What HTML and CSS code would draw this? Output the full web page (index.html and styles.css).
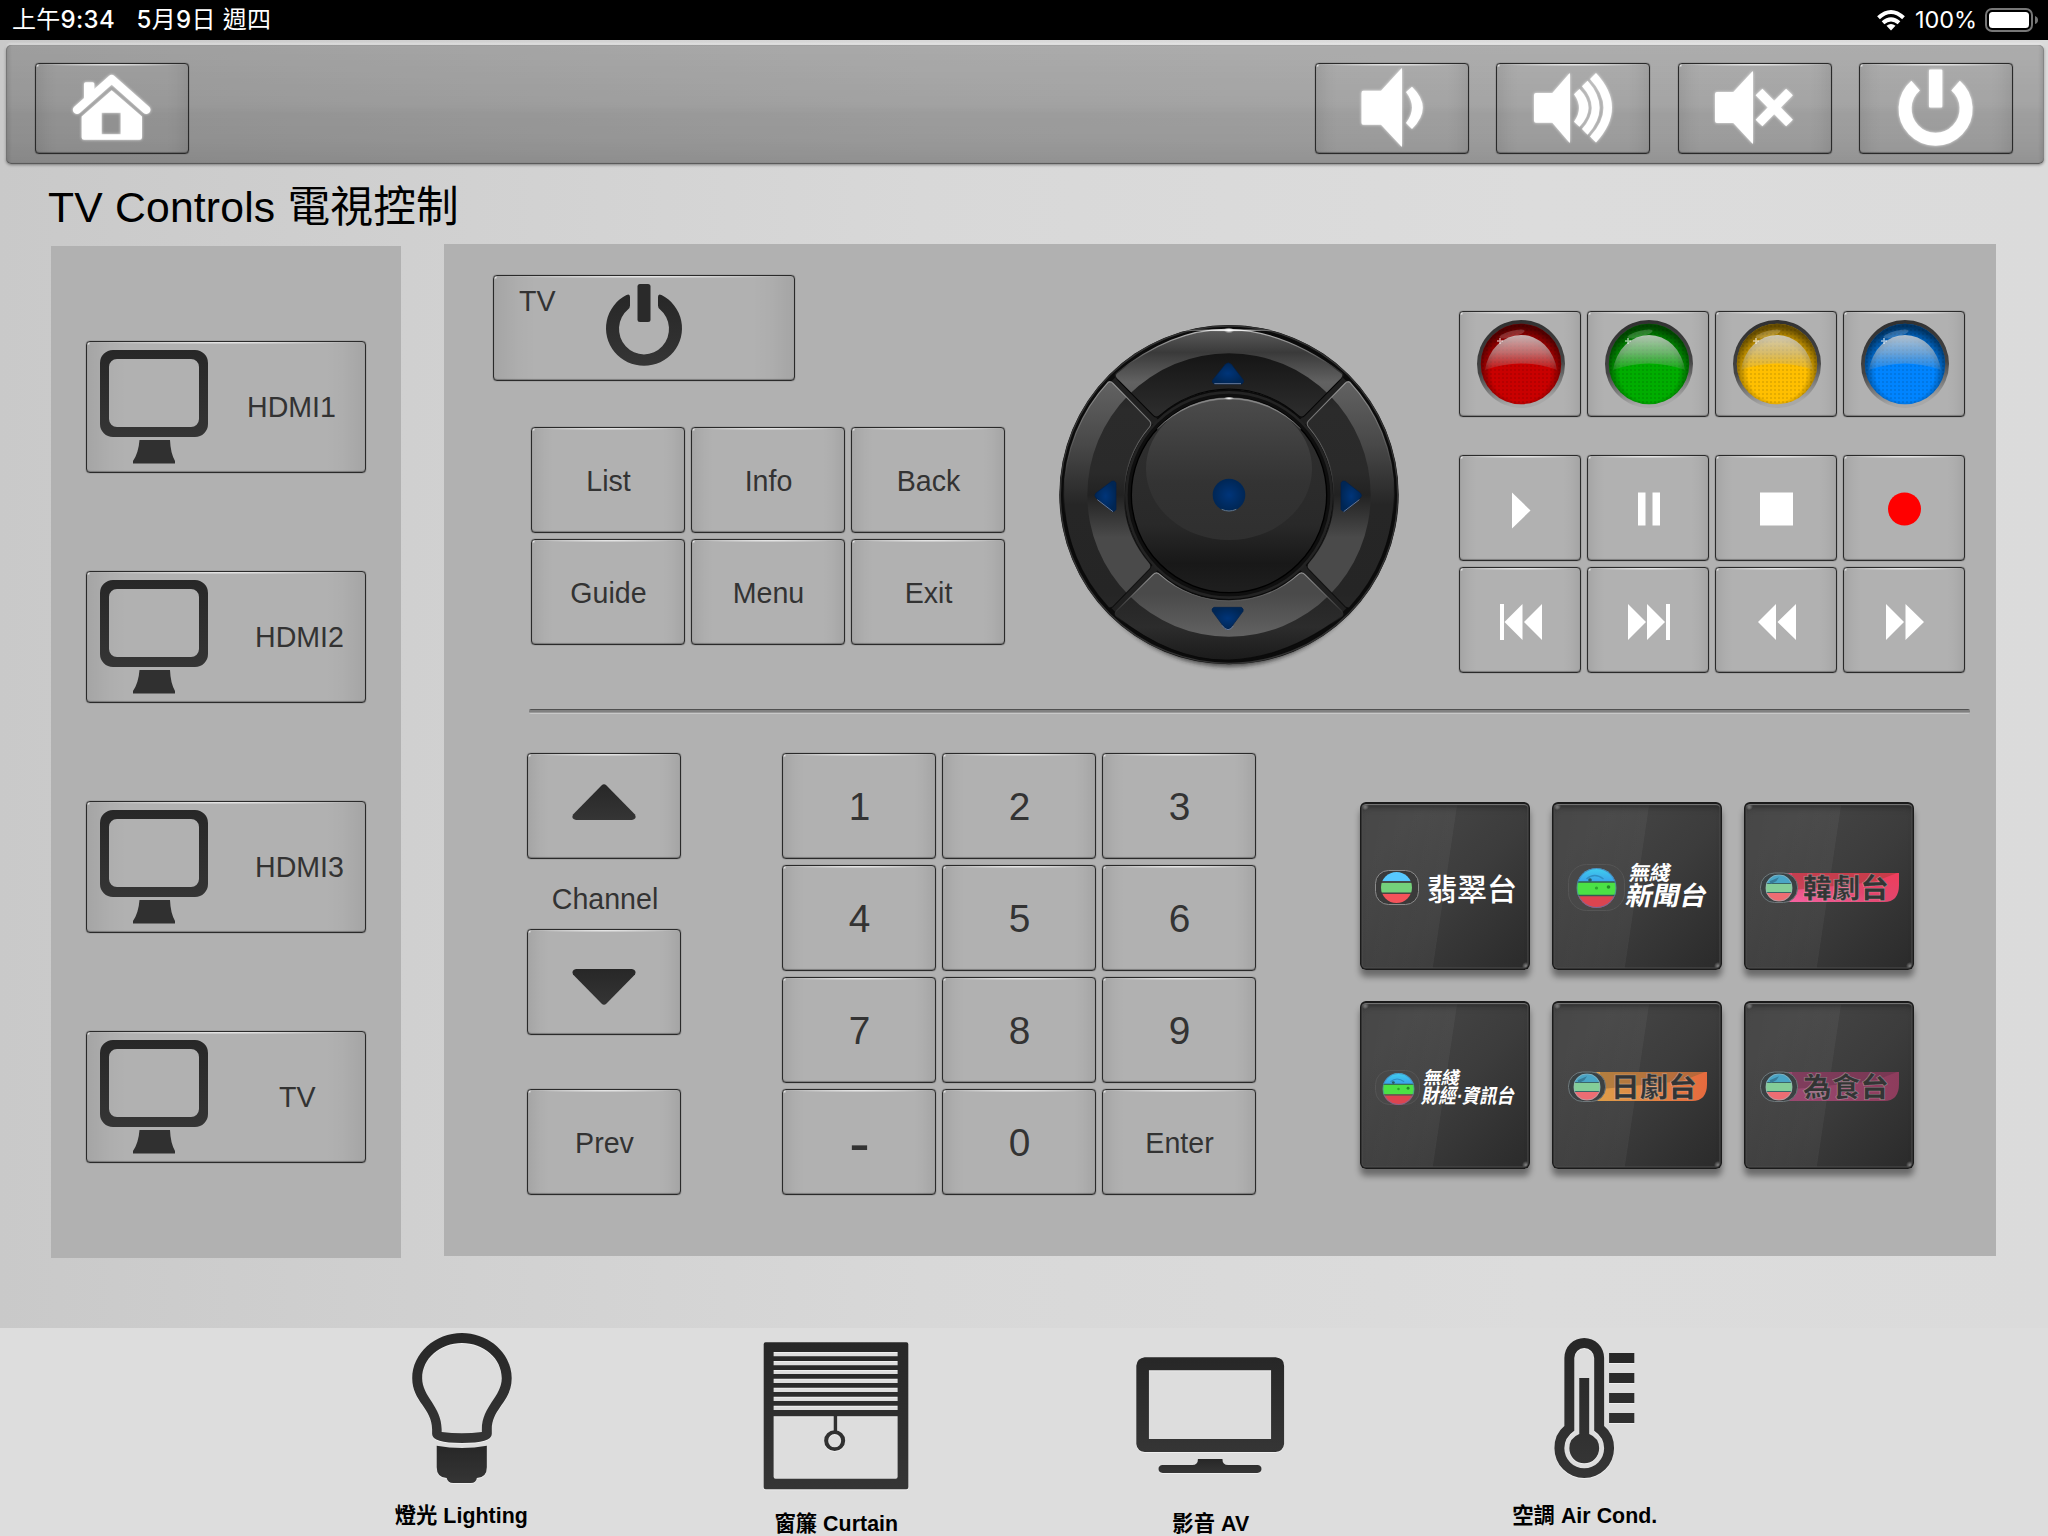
FILE: index.html
```html
<!DOCTYPE html>
<html lang="zh-Hant">
<head>
<meta charset="utf-8">
<title>TV Controls</title>
<link rel="stylesheet" href="styles.css">
</head>
<body>
<svg class="defs" width="0" height="0">
  <defs>
    <linearGradient id="ink" x1="0" y1="0" x2="0" y2="1"><stop offset="0" stop-color="#272727"/><stop offset="1" stop-color="#353535"/></linearGradient>
    <linearGradient id="rim" x1="0" y1="0" x2="0.15" y2="1"><stop offset="0" stop-color="#2e2e2e"/><stop offset=".6" stop-color="#444"/><stop offset="1" stop-color="#a8a8a8"/></linearGradient>
    <linearGradient id="glass" x1="0" y1="0" x2="0" y2="1"><stop offset="0" stop-color="#d2d2d2" stop-opacity=".85"/><stop offset=".5" stop-color="#bbb" stop-opacity=".58"/><stop offset="1" stop-color="#aaa" stop-opacity=".12"/></linearGradient>
    <radialGradient id="shade" cx=".5" cy=".6" r=".56"><stop offset=".65" stop-color="#000" stop-opacity="0"/><stop offset="1" stop-color="#000" stop-opacity=".6"/></radialGradient>
    <pattern id="dots" width="4" height="4" patternUnits="userSpaceOnUse"><rect x="1" y="1" width="2" height="2" fill="#000" opacity=".1"/></pattern>
    <symbol id="ball" viewBox="0 0 88 88">
      <circle cx="44" cy="44" r="44" fill="url(#rim)"/>
      <circle cx="44" cy="44" r="40.200" fill="currentColor"/>
      <circle cx="44" cy="44" r="40.200" fill="url(#dots)"/>
      <circle cx="44" cy="44" r="40.200" fill="url(#shade)"/>
      <path d="M8 50A36.500 42 0 0 1 80 50Q62 43.500 44 43.500T8 50Z" fill="url(#glass)"/>
      <ellipse cx="35" cy="14" rx="13" ry="3" fill="#fff" opacity=".18" transform="rotate(-15 35 14)"/>
      <path d="M20 21h6M23 18v6" stroke="#fff" stroke-width="1.600" opacity=".6"/>
    </symbol>
    <symbol id="monitor" viewBox="0 0 110 116">
      <path fill-rule="evenodd" fill="url(#ink)" d="M13 0h82a13 13 0 0 1 13 13v61a13 13 0 0 1-13 13H13A13 13 0 0 1 0 74V13A13 13 0 0 1 13 0ZM17 9a8 8 0 0 0-8 8v52a8 8 0 0 0 8 8h74a8 8 0 0 0 8-8V17a8 8 0 0 0-8-8Z"/>
      <path fill="#303030" d="M39.500 90h30.500q.5 13 5 21v2.500h-42V111q5.500-8 6.500-21Z"/>
    </symbol>
    <clipPath id="globe"><circle cx="20" cy="20" r="20"/></clipPath>
    <linearGradient id="g2" x1="0" y1="0" x2="0" y2="1"><stop offset="0" stop-color="#3fd0ee"/><stop offset="1" stop-color="#3aa2ea"/></linearGradient>
    <symbol id="globe-flat" viewBox="0 0 40 40"><g clip-path="url(#globe)"><path fill="#57c9ff" d="M0 0h40v12H0z"/><path fill="#74d17b" d="M0 14h40v13H0z"/><path fill="#f4535a" d="M0 28h40v12H0z"/><path fill="#444" d="M0 12h40v1.500H0zM0 26.500h40V28H0z"/></g></symbol>
    <symbol id="globe-news" viewBox="0 0 40 40"><g clip-path="url(#globe)"><path fill="url(#g2)" d="M0 0h40v14H0z"/><path fill="#4be145" d="M0 14h40v13H0z"/><path fill="#dc4450" d="M0 27h40v13H0z"/><path fill="#345c50" d="M0 13.300h40v1.400H0zM0 26.800h40v1.400H0z"/><path d="M10 11q8-7 17 0" stroke="#2e8fc4" stroke-width="1.500" fill="none"/><circle cx="13.500" cy="12" r="1.800" fill="#2a5b65"/><circle cx="20" cy="20" r="1.600" fill="#2aa52c"/><circle cx="32" cy="19" r="1.800" fill="#238a28"/></g><circle cx="20" cy="20" r="19.500" fill="none" stroke="#4e77b0" stroke-width=".8"/></symbol>
    <symbol id="globe-soft" viewBox="0 0 40 40"><g clip-path="url(#globe)"><path fill="#4aa5c6" d="M0 0h40v13H0z"/><path fill="#84cd98" d="M0 13h40v14H0z"/><path fill="#ed6d73" d="M0 27h40v13H0z"/><path fill="#3c6668" d="M0 12.500h40V14H0zM0 26h40v1.500H0z"/><path d="M6 10 20 4l-4 6-8 4z" fill="#377b98"/></g><circle cx="20" cy="20" r="19.500" fill="none" stroke="#9bb5bb" stroke-width="1"/></symbol>
    <linearGradient id="pink" x1="0" y1="1" x2="1" y2="0"><stop offset="0" stop-color="#f765a5"/><stop offset=".5" stop-color="#e2466d"/><stop offset="1" stop-color="#f03d5b"/></linearGradient>
    <linearGradient id="orange"><stop offset="0" stop-color="#dca04a"/><stop offset="1" stop-color="#e66a3e"/></linearGradient>
    <linearGradient id="plum"><stop offset="0" stop-color="#9b4a72"/><stop offset="1" stop-color="#8d3c5c"/></linearGradient>
  </defs>
</svg>

<header class="status">
  <div class="status-left"><span>上午<b>9:34</b></span><span><b>5</b>月<b>9</b>日 週四</span></div>
  <div class="status-right">
    <svg class="wifi" viewBox="0 0 28 20"><g fill="none" stroke="#fff" stroke-width="4"><path d="M1.500 7.800Q14-3.800 26.500 7.800"/><path d="M6 12.800q8-7 16 0"/></g><path fill="#fff" d="M9.500 15.800q4.500-3.600 9 0L14 20.500Z"/></svg>
    <span class="percent">100%</span>
    <svg class="battery" viewBox="0 0 54 24"><rect x="1" y="1" width="46" height="22" rx="6" fill="none" stroke="#777" stroke-width="2"/><rect x="4" y="4" width="40" height="16" rx="3.500" fill="#fff"/><path d="M50 8q3 1 3 4t-3 4Z" fill="#777"/></svg>
  </div>
</header>

<main class="stage">
  <nav class="toolbar">
    <button class="key tool"><svg viewBox="106 187 462 272"><path fill="none" stroke="#fff" stroke-width="25" stroke-linecap="round" stroke-linejoin="round" d="M232 330 336 238 440 330"/><path fill="#fff" d="M253 252q0-5 5-5h21q5 0 5 5v34l-31 28Z"/><path fill="#fff" fill-rule="evenodd" d="M336 271 427 350v63q0 7-7 7H253q-7 0-7-7v-63ZM306 339v64h57v-64Z"/></svg></button>
    <div class="tools-right">
      <button class="key tool"><svg viewBox="0 0 154 91" fill="#fff"><path d="M48 28.700h18L85 8q2-3 2-1v77q0 2-2-1L66 62.700H48q-1.500 0-1.500-2V31q0-2.300 1.500-2.300Z"/><path d="M97 24.700q21.600 21 0 42.300L91 61q12-15.300 0-31Z"/></svg></button>
      <button class="key tool"><svg viewBox="0 0 154 91" fill="#fff"><path d="M40 31h16.300L72 13q2-3 2-1v68q0 2-2-1L56.300 60.700H40q-2 0-2-2V33q0-2 2-2Z"/><path d="M83.500 27q18 18.700 0 37.700L78 59.700q10-13.700 0-27.400Z"/><path d="M91.600 18.700q24 27 0 54L86 67q19.500-21.300 0-42.700Z"/><path d="M100 11q32 34.700 0 69.400L94 74.500q27-28.800 0-57.500Z"/></svg></button>
      <button class="key tool"><svg viewBox="0 0 154 91" fill="#fff"><path d="M39 30h16.300L73 11q2-3 2-1v71q0 2-2-1L55.300 61H39q-2 0-2-2V32q0-2 2-2Z"/><path fill="none" stroke="#fff" stroke-width="9.500" d="m81 30 30.500 31M111.500 30 81 61"/></svg></button>
      <button class="key tool"><svg viewBox="0 0 154 91"><path fill="none" stroke="#fff" stroke-width="13" d="M56.600 23.700a30.500 30.500 0 1 0 40 0"/><rect x="70" y="7.500" width="13.300" height="38" rx="1" fill="#fff"/></svg></button>
    </div>
  </nav>

  <h1 class="title">TV Controls 電視控制</h1>

  <div class="panels">
    <aside class="sources">
      <button class="key source"><svg class="monitor"><use href="#monitor"/></svg><span class="s1">HDMI1</span></button>
      <button class="key source"><svg class="monitor"><use href="#monitor"/></svg><span class="s2">HDMI2</span></button>
      <button class="key source"><svg class="monitor"><use href="#monitor"/></svg><span class="s2">HDMI3</span></button>
      <button class="key source"><svg class="monitor"><use href="#monitor"/></svg><span class="s3">TV</span></button>
    </aside>

    <section class="remote">
      <div class="upper">
        <div class="menu-col">
          <button class="key tv-power"><span>TV</span><svg viewBox="0 0 78 84"><path fill="url(#ink)" d="M21.500 12q3.500-1.800 3.500 2v8.500q0 2.200-1.800 3.700A25 25.500 0 1 0 54.800 26.200Q53 24.700 53 22.500V14q0-3.800 3.500-2A38 37.500 0 1 1 21.500 12Z"/><rect x="32.500" y="1" width="13" height="38" rx="2.500" fill="#2a2a2a"/></svg></button>
          <div class="menu-grid">
            <button class="key">List</button><button class="key">Info</button><button class="key">Back</button>
            <button class="key">Guide</button><button class="key">Menu</button><button class="key">Exit</button>
          </div>
        </div>

        <svg class="dpad" viewBox="0 0 1140 1110">
          <defs>
            <linearGradient id="outerBand" gradientUnits="userSpaceOnUse" x1="0" y1="58" x2="0" y2="1050"><stop offset="0" stop-color="#5c5c5c"/><stop offset=".07" stop-color="#3a3a3a"/><stop offset=".16" stop-color="#626262"/><stop offset=".35" stop-color="#484848"/><stop offset=".53" stop-color="#262626"/><stop offset=".8" stop-color="#252525"/><stop offset=".9" stop-color="#2c2c2c"/><stop offset="1" stop-color="#1b1b1b"/></linearGradient>
            <linearGradient id="innerBand" gradientUnits="userSpaceOnUse" x1="0" y1="130" x2="0" y2="980"><stop offset="0" stop-color="#151515"/><stop offset=".2" stop-color="#2b2b2b"/><stop offset=".42" stop-color="#2a2a2a"/><stop offset=".5" stop-color="#222"/><stop offset=".65" stop-color="#4a4a4a"/><stop offset=".85" stop-color="#4a4a4a"/><stop offset="1" stop-color="#626262"/></linearGradient>
            <linearGradient id="edge" x1="0" y1="0" x2="0" y2="1"><stop offset="0" stop-color="#bbb"/><stop offset=".3" stop-color="#666"/><stop offset=".6" stop-color="#050505"/></linearGradient>
            <linearGradient id="hub" x1="0" y1="0" x2="0" y2="1"><stop offset="0" stop-color="#303030"/><stop offset=".65" stop-color="#292929"/><stop offset=".85" stop-color="#181818"/><stop offset="1" stop-color="#1f1f1f"/></linearGradient>
            <linearGradient id="hubGlass" x1="0" y1="0" x2="0" y2="1"><stop offset="0" stop-color="#4c4c4c"/><stop offset=".6" stop-color="#333"/><stop offset="1" stop-color="#2f2f2f"/></linearGradient>
            <radialGradient id="blue"><stop offset="0" stop-color="#00357a"/><stop offset="1" stop-color="#002654"/></radialGradient>
            <radialGradient id="glint"><stop offset="0" stop-color="#fff"/><stop offset="1" stop-color="#fff" stop-opacity="0"/></radialGradient>
            <clipPath id="segments"><path d="M229 190Q399 54 567 58T906 190Q912 197 904 206L794 317Q785 326 775 317A312 312 0 0 0 359 317Q349 326 340 317L230 206Q222 197 229 190Z"/><path d="M229 919Q399 1054 567 1050T906 919Q912 911 904 902L794 793Q785 784 775 793A312 312 0 0 1 359 793Q349 784 340 793L230 902Q222 911 229 919Z"/><path d="M930 217A496 496 0 0 1 930 891Q925 897 915 890L806 778Q797 769 806 758A312 312 0 0 0 806 352Q797 342 806 332L915 220Q923 212 930 217Z"/><path d="M204 217A496 496 0 0 0 204 891Q209 897 219 890L328 778Q337 769 328 758A312 312 0 0 1 328 352Q337 342 328 332L219 220Q211 212 204 217Z"/></clipPath>
            <clipPath id="hubClip"><circle cx="567" cy="555" r="292"/></clipPath>
            <filter id="soft"><feGaussianBlur stdDeviation="7"/></filter>
          </defs>
          <ellipse cx="567" cy="570" rx="485" ry="500" fill="#222" opacity=".7" filter="url(#soft)"/>
          <circle cx="567" cy="554" r="509" fill="#0b0b0b"/>
          <circle cx="567" cy="554" r="506" fill="none" stroke="#333" stroke-width="4"/>
          <path d="M218 210 916 898M916 210 218 898" stroke="#202020" stroke-width="22"/>
          <g clip-path="url(#segments)"><circle cx="567" cy="554" r="500" fill="url(#outerBand)"/><circle cx="567" cy="555" r="425" fill="url(#innerBand)"/></g>
          <g fill="none" stroke="url(#edge)" stroke-width="3.500"><path d="M229 190Q399 54 567 58T906 190Q912 197 904 206L794 317Q785 326 775 317A312 312 0 0 0 359 317Q349 326 340 317L230 206Q222 197 229 190Z"/><path d="M229 919Q399 1054 567 1050T906 919Q912 911 904 902L794 793Q785 784 775 793A312 312 0 0 1 359 793Q349 784 340 793L230 902Q222 911 229 919Z" opacity=".7"/><path d="M930 217A496 496 0 0 1 930 891Q925 897 915 890L806 778Q797 769 806 758A312 312 0 0 0 806 352Q797 342 806 332L915 220Q923 212 930 217Z" opacity=".7"/><path d="M204 217A496 496 0 0 0 204 891Q209 897 219 890L328 778Q337 769 328 758A312 312 0 0 1 328 352Q337 342 328 332L219 220Q211 212 204 217Z" opacity=".7"/></g>
          <circle cx="567" cy="555" r="308" fill="#0f0f0f" stroke="#232323" stroke-width="8"/>
          <circle cx="567" cy="555" r="293" fill="url(#hub)" stroke="#000" stroke-width="4"/>
          <g clip-path="url(#hubClip)"><ellipse cx="567" cy="476" rx="249" ry="214" fill="url(#hubGlass)"/></g>
          <path d="M352 357A293 293 0 0 1 782 357A296 288 0 0 0 352 357Z" fill="#888" stroke="#888" stroke-width="1.500"/>
          <ellipse cx="567" cy="61" rx="16" ry="9" fill="url(#glint)"/><ellipse cx="567" cy="61" rx="160" ry="4" fill="url(#glint)"/>
          <ellipse cx="567" cy="265" rx="16" ry="5" fill="url(#glint)"/>
          <circle cx="567" cy="555" r="49" fill="url(#blue)"/><path d="M545 598q22 10 44 0" stroke="#678" stroke-width="3" fill="none"/>
          <g fill="url(#blue)" stroke="#00204c" stroke-width="2"><path d="M556 163q9-9 18 0l36 47q3 8-5 12h-82q-9-4-5-12Z"/><path d="M554 954q9 9 18 0l37-50q3-8-5-12h-82q-9 4-5 12Z"/><path d="M168 549q-7 7 0 15l47 39q8 5 13-5v-80q-5-8-13-4Z"/><path d="M961 549q7 7 0 15l-45 39q-8 5-13-5v-80q5-8 13-4Z"/></g>
          <g stroke="#66799a" stroke-width="3" fill="none"><path d="M523 221h80M546 946q9 13 18 13t16-11M172 569l47 36M958 569l-47 36"/></g>
        </svg>

        <div class="media-col">
          <div class="media-grid">
            <button class="key"><svg class="ball red"><use href="#ball"/></svg></button>
            <button class="key"><svg class="ball green"><use href="#ball"/></svg></button>
            <button class="key"><svg class="ball yellow"><use href="#ball"/></svg></button>
            <button class="key"><svg class="ball blue"><use href="#ball"/></svg></button>
          </div>
          <div class="media-grid">
            <button class="key"><svg class="glyph" viewBox="0 0 122 107"><path d="M53 37.500v36L71.500 55.500Z"/></svg></button>
            <button class="key"><svg class="glyph" viewBox="0 0 122 107"><path d="M51 37.500h7.500v33H51zM65.500 37.500H73v33h-7.500z"/></svg></button>
            <button class="key"><svg class="glyph" viewBox="0 0 122 107"><path d="M45 37.500h33v33H45z"/></svg></button>
            <button class="key"><svg class="glyph" viewBox="0 0 122 107"><circle cx="61.500" cy="54" r="16.500" fill="#f00"/></svg></button>
            <button class="key"><svg class="glyph" viewBox="0 0 122 107"><path d="M41 37h4v36h-4zM63.500 37v36l-18-18ZM83 37v36L65 55Z"/></svg></button>
            <button class="key"><svg class="glyph" viewBox="0 0 122 107"><path d="M41 37v36l18-18ZM60 37v36l18-18ZM79 37h4v36h-4z"/></svg></button>
            <button class="key"><svg class="glyph" viewBox="0 0 122 107"><path d="M61 37v36L43 55ZM81 37v36L62.500 55Z"/></svg></button>
            <button class="key"><svg class="glyph" viewBox="0 0 122 107"><path d="M43 37v36l18-18ZM62.500 37v36L81 55Z"/></svg></button>
          </div>
        </div>
      </div>

      <div class="rule"></div>

      <div class="lower">
        <div class="channel-col">
          <button class="key"><svg class="arrow up" viewBox="0 0 64 36"><path fill="url(#ink)" d="M29.500 1.500q2.500-2.500 5 0L63 30.500q2 4.500-3 5.500H4q-5-1-3-5.500Z"/></svg></button>
          <span class="channel-label">Channel</span>
          <button class="key"><svg class="arrow down" viewBox="0 0 64 36"><path fill="url(#ink)" d="M29.500 34.500q2.500 2.500 5 0L63 5.500Q65 1 60 0H4q-5 1-3 5.500Z"/></svg></button>
          <button class="key prev">Prev</button>
        </div>
        <div class="keypad">
          <button class="key">1</button><button class="key">2</button><button class="key">3</button>
          <button class="key">4</button><button class="key">5</button><button class="key">6</button>
          <button class="key">7</button><button class="key">8</button><button class="key">9</button>
          <button class="key"><span class="dash">-</span></button><button class="key">0</button><button class="key word">Enter</button>
        </div>
        <div class="stations">
          <button class="tile"><svg viewBox="0 0 170 168"><rect x="15.500" y="68.500" width="43" height="34" rx="13" fill="#3a3a3a" stroke="#8b8b8b"/><use href="#globe-flat" x="21" y="70" width="31" height="31"/><text class="light" x="67" y="97.500" font-size="30" textLength="90" lengthAdjust="spacingAndGlyphs">翡翠台</text></svg></button>
          <button class="tile"><svg viewBox="0 0 170 168"><rect x="16.500" y="62.500" width="56" height="46" rx="18" fill="#484848" stroke="#555"/><use href="#globe-news" x="24.500" y="66" width="40" height="40"/><g transform="skewX(-12)"><text x="93" y="78.500" font-size="20" textLength="41" lengthAdjust="spacingAndGlyphs">無綫</text><text x="94.500" y="103.500" font-size="26" textLength="81" lengthAdjust="spacingAndGlyphs">新聞台</text></g></svg></button>
          <button class="tile"><svg viewBox="0 0 170 168"><path d="M40 71h115v12q0 17-15 17H40Z" fill="url(#pink)"/><path d="M48 71h105L130 80 50 88Z" fill="#b03a3c" opacity=".6"/><rect x="16.500" y="71" width="37" height="29.500" rx="14" fill="#3b4143" stroke="#6e787b"/><use href="#globe-soft" x="21.500" y="72.500" width="27" height="27"/><text class="ink" x="59" y="95.500" font-size="27" textLength="86" lengthAdjust="spacingAndGlyphs">韓劇台</text></svg></button>
          <button class="tile"><svg viewBox="0 0 170 168"><rect x="15.500" y="69.500" width="44" height="34" rx="14" fill="#484848" stroke="#555"/><use href="#globe-news" x="22.500" y="72" width="32" height="32"/><g transform="skewX(-12)"><text x="80.500" y="83" font-size="17.500" textLength="36" lengthAdjust="spacingAndGlyphs">無綫</text><text x="82.500" y="102" font-size="20" textLength="93" lengthAdjust="spacingAndGlyphs">財經<tspan class="dot">·</tspan>資訊台</text></g></svg></button>
          <button class="tile"><svg viewBox="0 0 170 168"><path d="M40 71h115v12q0 17-15 17H40Z" fill="url(#orange)"/><path d="M48 71h105L130 80 50 88Z" fill="#8a6236" opacity=".5"/><rect x="16.500" y="71" width="37" height="29.500" rx="14" fill="#3b4143" stroke="#6e787b"/><use href="#globe-soft" x="21.500" y="72.500" width="27" height="27"/><text class="ink" x="59" y="95.500" font-size="27" textLength="86" lengthAdjust="spacingAndGlyphs">日劇台</text></svg></button>
          <button class="tile"><svg viewBox="0 0 170 168"><path d="M40 71h115v12q0 17-15 17H40Z" fill="url(#plum)"/><path d="M48 71h105L130 80 50 88Z" fill="#66324a" opacity=".5"/><rect x="16.500" y="71" width="37" height="29.500" rx="14" fill="#3b4143" stroke="#6e787b"/><use href="#globe-soft" x="21.500" y="72.500" width="27" height="27"/><text class="ink" x="59" y="95.500" font-size="27" textLength="86" lengthAdjust="spacingAndGlyphs">為食台</text></svg></button>
        </div>
      </div>
    </section>
  </div>
</main>

<footer class="dock">
  <a class="dock-item">
    <svg width="106" height="164" viewBox="126 54 277 492" preserveAspectRatio="none" fill="url(#ink)"><path fill-rule="evenodd" d="M267 69C337 69 397 130 397 205C397 275 345 295 345 358V372Q345 399 267 399T189 372V358C189 295 137 275 137 205C137 130 197 69 267 69ZM267 99C210 99 163 145 163 205C163 260 214 290 214 358V366Q267 374 319 366V358C319 290 371 260 371 205C371 145 324 99 267 99Z"/><path d="M201 407Q267 421 332 407V472Q332 503 306 504Q304 519 290 519H244Q230 519 227 504Q201 503 201 472Z"/></svg>
    <span>燈光 Lighting</span>
  </a>
  <a class="dock-item low">
    <svg width="150" height="164" viewBox="1049 54 392 492" preserveAspectRatio="none"><path fill="url(#ink)" fill-rule="evenodd" d="M1061 97H1429Q1434 97 1434 103V532Q1434 538 1429 538H1061Q1056 538 1056 532V103Q1056 97 1061 97ZM1082 126V139H1406V126ZM1082 153V166H1406V153ZM1082 180V192H1406V180ZM1082 206V219H1406V206ZM1082 233V246H1406V233ZM1082 260V273H1406V260ZM1082 287V300H1406V287ZM1082 319V500Q1082 506 1087 506H1401Q1406 506 1406 500V319Z"/><path d="M1239 317h9v46h-9z" fill="#303030"/><path fill="#303030" fill-rule="evenodd" d="M1214 392A27.500 31 0 1 1 1269 392A27.500 31 0 1 1 1214 392ZM1224.500 392A17 20 0 1 0 1258.500 392A17 20 0 1 0 1224.500 392Z"/></svg>
    <span>窗簾 Curtain</span>
  </a>
  <a class="dock-item low">
    <svg width="152" height="164" viewBox="89 54 397 492" preserveAspectRatio="none" fill="url(#ink)"><path fill-rule="evenodd" d="M117 142H459Q481 145 481 167V402Q479 423 459 426H117Q97 423 95 402V167Q97 145 117 142ZM128 181V387H447V181Z"/><path d="M256 447H320Q320 465 335 465H411Q422 466 422 477Q422 488 411 489H164Q153 488 153 477Q153 466 164 465H241Q256 465 256 447Z"/></svg>
    <span>影音 AV</span>
  </a>
  <a class="dock-item">
    <svg width="104" height="164" viewBox="1131 54 272 492" preserveAspectRatio="none" fill="url(#ink)"><path fill-rule="evenodd" d="M1213 144A52 60 0 0 1 1317 144V348Q1343 372 1343 415A78 89 0 0 1 1187 415Q1187 372 1213 348ZM1239 144V362Q1213 382 1213 415A52 60 0 0 0 1317 415Q1317 382 1291 362V144A26 30 0 0 0 1239 144Z"/><path d="M1252 204H1278V372Q1304 384 1304 415A39 45 0 0 1 1226 415Q1226 384 1252 372ZM1330 129h66v30h-66zM1330 189h66v30h-66zM1330 249h66v30h-66zM1330 309h66v30h-66z"/></svg>
    <span>空調 Air Cond.</span>
  </a>
</footer>
</body>
</html>
```
FILE: styles.css
```css
* { box-sizing: border-box; }

body {
  margin: 0;
  width: 2048px;
  height: 1536px;
  overflow: hidden;
  display: flex;
  flex-direction: column;
  font-family: "Liberation Sans", "Noto Sans CJK TC", sans-serif;
  color: #333;
}

.defs { position: absolute; }

button {
  font: inherit;
  color: inherit;
  padding: 0;
  margin: 0;
}

svg { display: block; flex: none; overflow: visible; }

/* status bar */
.status {
  height: 40px;
  background: #000;
  color: #fff;
  display: flex;
  justify-content: space-between;
  align-items: center;
  padding: 0 9px 0 12px;
  font: 400 24px/40px "Inter", "Noto Sans CJK TC", sans-serif;
}

.status b { font-weight: 500; }
.status-left { display: flex; gap: 21.5px; letter-spacing: .3px; }
.status-right { display: flex; align-items: center; }
.wifi { width: 28px; height: 20px; margin-right: 10px; }
.percent { font-size: 23.5px; font-weight: 400; letter-spacing: -.1px; }
.battery { width: 54px; height: 24px; margin-left: 8px; }

/* stage */
.stage {
  flex: 1;
  background: linear-gradient(90deg, #c9c9c9, #d0d0d0 20%, #d8d8d8 45%, #dcdcdc 75%, #dbdbdb);
}

.toolbar {
  height: 119px;
  margin: 5px 4px 0 6px;
  padding: 17.5px 31px 0 29px;
  display: flex;
  justify-content: space-between;
  border-radius: 5px;
  background:
    linear-gradient(90deg, rgba(0, 0, 0, .1), transparent 6px, transparent calc(100% - 6px), rgba(0, 0, 0, .1)),
    linear-gradient(rgba(0, 0, 0, .21), rgba(0, 0, 0, .25) 50%, rgba(0, 0, 0, .28) 58%, rgba(0, 0, 0, .29) 78%, rgba(0, 0, 0, .33));
  box-shadow: inset 0 -1px 1px #555, inset 1px 0 1px #777, inset -1px 0 1px #888, 0 -2px 2px rgba(255, 255, 255, .35), 0 1px 3px rgba(0, 0, 0, .4);
}

.tools-right { display: flex; gap: 27.3px; }

/* glass key */
.key {
  display: flex;
  align-items: center;
  justify-content: center;
  width: 154px;
  height: 106px;
  border: 1px solid #2a2a2a;
  border-radius: 4px;
  font-size: 28.6px;
  line-height: 1;
  background:
    radial-gradient(circle at 1px 1px, #fff 0, rgba(255, 255, 255, 0) 2.5px),
    radial-gradient(50% 2.5px at 50% 0, rgba(255, 255, 255, .8), rgba(255, 255, 255, 0)),
    linear-gradient(90deg, rgba(0, 0, 0, .07), rgba(0, 0, 0, .02) 8%, transparent 14%, transparent 86%, rgba(0, 0, 0, .02) 92%, rgba(0, 0, 0, .07));
  box-shadow: 0 0 1px rgba(0, 0, 0, .8), inset 0 -1px 1px rgba(0, 0, 0, .3);
}

.tool { height: 91px; }
.tool svg { width: 154px; height: 91px; margin-top: -1px; filter: drop-shadow(0 0 1.5px rgba(255, 255, 255, .8)); }

.title {
  margin: 13px 0 0 48px;
  height: 67px;
  font-size: 42.67px;
  line-height: 60px;
  font-weight: 400;
  letter-spacing: .2px;
  color: #000;
}

.panels { display: flex; align-items: flex-start; }

/* sources */
.sources {
  width: 350px;
  height: 1012px;
  margin: 2px 43px 0 51px;
  padding: 95px 35px 0;
  background: #b1b1b1;
  display: flex;
  flex-direction: column;
  gap: 98px;
}

.source { width: 280px; height: 132px; justify-content: flex-start; padding-left: 13px; }
.monitor { width: 110px; height: 116px; margin-top: 2px; }
.s1 { margin-left: 37px; }
.s2 { margin-left: 45px; }
.s3 { margin-left: 69px; }

/* remote */
.remote { width: 1552px; height: 1012px; background: #b1b1b1; }
.upper { height: 465px; display: flex; align-items: flex-start; }
.menu-col { width: 512px; margin: 31px 0 0 49px; }
.tv-power { width: 302px; justify-content: flex-start; align-items: flex-start; padding-left: 25px; }
.tv-power span { margin-top: 11px; width: 86px; text-align: left; }
.tv-power svg { width: 78px; height: 84px; margin-top: 7px; }

.menu-grid {
  margin: 46px 0 0 38px;
  display: grid;
  grid-template-columns: repeat(3, 154px);
  gap: 6px;
}

.menu-grid .key, .prev, .keypad .key { padding: 3px 0 0 1px; }

.dpad { width: 380px; height: 370px; margin: 66px 0 0 35px; }

.media-col { margin: 67px 0 0 39px; display: flex; flex-direction: column; gap: 38px; }
.media-grid { display: grid; grid-template-columns: repeat(4, 122px); gap: 6px; }
.media-grid .key { width: 122px; }
.ball { width: 88px; height: 88px; margin-top: -1px; margin-left: 1px; }
.red { color: #c90000; }
.green { color: #00ad00; }
.yellow { color: #ffbf00; }
.blue { color: #0084ff; }
.glyph { width: 122px; height: 107px; fill: #fff; }

.rule {
  width: 1441px;
  height: 5px;
  margin: 0 0 -1px 85px;
  border-radius: 2px;
  background: linear-gradient(#505050 0 1px, #808080 1px 3px, #9a9a9a 3px 4px, #c8c8c8 4px);
}

.lower { display: flex; align-items: flex-start; }
.channel-col { width: 154px; margin: 40px 0 0 83px; display: flex; flex-direction: column; }
.arrow { width: 64px; height: 36px; }
.up { margin-top: -9px; }
.down { margin-top: 9px; }
.channel-label { height: 70px; line-height: 81px; font-size: 28.6px; text-align: center; padding-left: 2px; }
.prev { margin-top: 54px; }

.keypad {
  margin: 40px 0 0 101px;
  display: grid;
  grid-template-columns: repeat(3, 154px);
  gap: 6px;
}

.keypad .key { font-size: 38.8px; }
.keypad .word { font-size: 28.6px; }
.dash { font-weight: 700; margin-top: 4px; transform: scaleX(1.55); }

/* stations */
.stations {
  margin: 89px 0 0 104px;
  display: grid;
  grid-template-columns: repeat(3, 170px);
  gap: 31px 22px;
}

.tile {
  width: 170px;
  height: 168px;
  border: 0;
  border-radius: 6px;
  background:
    radial-gradient(circle at 5px 4px, #ddd, transparent 4px),
    radial-gradient(circle at 166px 164px, #888, transparent 4px),
    linear-gradient(98.5deg, rgba(255, 255, 255, .01), rgba(255, 255, 255, .045) 49.8%, transparent 50.2%),
    linear-gradient(135deg, #454545 20%, #3c3c3c 55%, #2a2a2a);
  box-shadow: inset 0 0 0 1.5px #1b1b1b, inset 0 2px 0 #1b1b1b, inset 0 4px 1px -1px #777, inset 0 0 0 2.5px #4c4c4c, inset 0 7px 7px -3px #252525, 0 7px 6px rgba(0, 0, 0, .4);
}

.tile svg { width: 170px; height: 168px; }
.tile text { font-family: "Noto Sans CJK TC", sans-serif; font-weight: 700; fill: #fff; }
.tile .light { font-weight: 500; }
.tile .dot { font-family: "Liberation Sans", sans-serif; }
.tile .ink { font-weight: 900; fill: #343434; stroke: rgba(255, 255, 255, .35); stroke-width: .7px; }

/* dock */
.dock {
  height: 208px;
  padding-left: 274px;
  background: #ddd;
  display: grid;
  grid-template-columns: repeat(4, 374.5px);
}

.dock-item {
  display: flex;
  flex-direction: column;
  align-items: center;
  font-size: 21.33px;
  font-weight: 700;
  color: #000;
}

.dock-item svg { filter: drop-shadow(0 1px 0 rgba(255, 255, 255, .5)); }
.dock-item span { margin-top: 10px; line-height: 28px; white-space: nowrap; letter-spacing: .05px; }
.dock-item.low span { margin-top: 18px; padding-left: 1px; }
```
